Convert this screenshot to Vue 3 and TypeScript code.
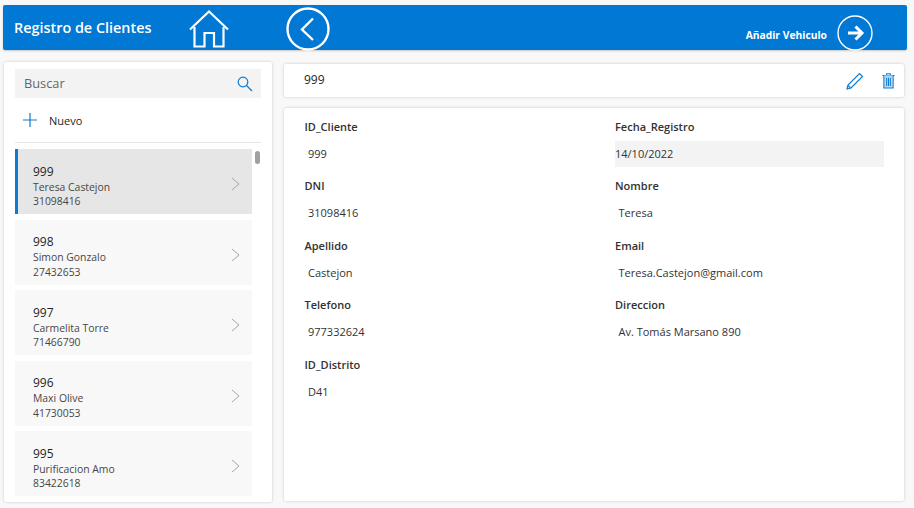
<script setup lang="ts">
interface Cliente { id: string; name: string; dni: string }
const clientes: Cliente[] = [
  { id: '999', name: 'Teresa Castejon', dni: '31098416' },
  { id: '998', name: 'Simon Gonzalo', dni: '27432653' },
  { id: '997', name: 'Carmelita Torre', dni: '71466790' },
  { id: '996', name: 'Maxi Olive', dni: '41730053' },
  { id: '995', name: 'Purificacion Amo', dni: '83422618' },
]
const campos = [
  { label: 'ID_Cliente', value: '999' },
  { label: 'Fecha_Registro', value: '14/10/2022', shaded: true },
  { label: 'DNI', value: '31098416' },
  { label: 'Nombre', value: 'Teresa' },
  { label: 'Apellido', value: 'Castejon' },
  { label: 'Email', value: 'Teresa.Castejon@gmail.com' },
  { label: 'Telefono', value: '977332624' },
  { label: 'Direccion', value: 'Av. Tomás Marsano 890' },
  { label: 'ID_Distrito', value: 'D41' },
]
</script>

<template>
  <div class="page">
    <header class="bar">
      <h1 class="title">Registro de Clientes</h1>
      <svg class="home" width="40" height="38" viewBox="0 0 40 38" fill="none" stroke="#fff" stroke-width="2.2">
        <path d="M1 19.5 L20 1.5 L39 19.5" />
        <path d="M5.5 17 V36.5 H15.5 V23 H25 V36.5 H34.5 V17" />
      </svg>
      <svg class="back" width="44" height="44" viewBox="0 0 44 44" fill="none" stroke="#fff">
        <circle cx="22" cy="22" r="20.5" stroke-width="2.4" />
        <path d="M27 11.5 L16 22.5 L27 33" stroke-width="2.4" />
      </svg>
      <span class="add">Añadir Vehiculo</span>
      <svg class="next" width="36" height="36" viewBox="0 0 36 36" fill="none" stroke="#fff">
        <circle cx="18" cy="18" r="17" stroke-width="1.4" />
        <path d="M11 18 H24.5 M18.5 11.5 L25 18 L18.5 24.5" stroke-width="3" />
      </svg>
    </header>

    <main class="body">
      <aside class="side">
        <div class="search">
          <span class="search-text">Buscar</span>
          <svg width="16" height="16" viewBox="0 0 16 16" fill="none" stroke="#0f7bd0" stroke-width="1.2">
            <circle cx="6" cy="6" r="4.8" />
            <path d="M9.5 9.5 L15 15" />
          </svg>
        </div>
        <div class="new">
          <svg width="14" height="14" viewBox="0 0 14 14" stroke="#0f7bd0" stroke-width="1.2">
            <path d="M7 0 V14 M0 7 H14" />
          </svg>
          <span>Nuevo</span>
        </div>
        <div class="list-wrap">
          <div class="list">
            <div v-for="(c, i) in clientes" :key="c.id" class="item" :class="{ selected: i === 0 }">
              <div class="item-text">
                <div class="item-id">{{ c.id }}</div>
                <div class="item-sub">{{ c.name }}</div>
                <div class="item-sub">{{ c.dni }}</div>
              </div>
              <svg class="chev" width="9" height="14" viewBox="0 0 9 14" fill="none" stroke="#a6a6a6" stroke-width="1">
                <path d="M1 1 L8 7 L1 13" />
              </svg>
            </div>
          </div>
          <div class="thumb"></div>
        </div>
      </aside>

      <section class="main">
        <div class="top">
          <span class="top-id">999</span>
          <svg class="pencil" width="18" height="18" viewBox="0 0 18 18" fill="none" stroke="#0f7bd0" stroke-width="1.2">
            <path d="M1 17 L2 13 L13.5 1.5 L16.5 4.5 L5 16 Z" />
            <path d="M2 13.5 L4.5 16" />
          </svg>
          <svg class="trash" width="13" height="16" viewBox="0 0 14 17" fill="none" stroke="#0f7bd0" stroke-width="1.1">
            <path d="M0.5 2.5 H13.5 M5 2.5 V0.8 H9 V2.5" />
            <path d="M2 2.5 V16 H12 V2.5" fill="#bcd9f1" />
            <path d="M5 5 V14 M7 5 V14 M9 5 V14" />
          </svg>
        </div>
        <div class="detail">
          <div v-for="f in campos" :key="f.label" class="field">
            <div class="label">{{ f.label }}</div>
            <div class="value" :class="{ shaded: f.shaded }">{{ f.value }}</div>
          </div>
        </div>
      </section>
    </main>
  </div>
</template>

<style>
html, body { margin: 0; background: #f8f8f8; }
</style>

<style scoped>
.page {
  width: 914px;
  height: 508px;
  box-sizing: border-box;
  padding: 5px 7px 6px 3px;
  display: flex;
  flex-direction: column;
  font-family: "Open Sans", "Noto Sans", sans-serif;
  color: #252423;
  overflow: hidden;
}
.bar {
  height: 45px;
  flex: none;
  background: #0078d4;
  border-radius: 2px;
  box-shadow: 0 1px 2px rgba(0, 0, 0, .2);
  display: flex;
  align-items: center;
  color: #fff;
}
.title {
  margin: 0 0 0 11px;
  width: 175px;
  font-size: 14.4px;
  font-weight: 600;
  flex: none;
}
.home { flex: none; margin-top: 3px; }
.back { flex: none; margin: 3px 0 0 57px; }
.add {
  margin: 14px 10px 0 auto;
  font-size: 10.3px;
  font-weight: 700;
}
.next { flex: none; margin: 10px 34px 0 0; }
.body {
  flex: 1;
  min-height: 0;
  display: flex;
  margin-top: 12px;
  padding-left: 1px;
  padding-right: 3px;
  gap: 12px;
}
.side {
  width: 268px;
  flex: none;
  box-sizing: border-box;
  background: #fff;
  border-radius: 2px;
  box-shadow: 0 0 3px rgba(0, 0, 0, .2);
  padding: 7px 11px 5px;
  display: flex;
  flex-direction: column;
}
.search {
  height: 29px;
  flex: none;
  background: #f3f3f3;
  display: flex;
  align-items: center;
  justify-content: space-between;
  padding: 0 8px 0 9px;
}
.search-text { font-size: 12.8px; color: #666; margin-top: -2px; }
.new {
  height: 45px;
  flex: none;
  box-sizing: border-box;
  border-bottom: 1px solid #e8e8e8;
  display: flex;
  align-items: center;
  gap: 12px;
  padding-left: 8px;
  font-size: 11px;
  margin-bottom: 6px;
}
.list-wrap {
  flex: 1;
  min-height: 0;
  position: relative;
  overflow: hidden;
}
.list {
  width: 237px;
  display: flex;
  flex-direction: column;
  gap: 5.5px;
}
.item {
  height: 65px;
  flex: none;
  box-sizing: border-box;
  background: #f8f8f8;
  padding: 4px 12px 0 18px;
  display: flex;
  align-items: center;
  justify-content: space-between;
}
.selected {
  background: #e6e6e6;
  border-left: 3px solid #0f7bd0;
  padding-left: 15px;
}
.chev { margin-top: 1px; }
.item-text { line-height: 14.5px; margin-top: 5px; }
.item-id { font-size: 12px; line-height: 16px; color: #252423; }
.item-sub { font-size: 10.4px; color: #484644; }
.thumb {
  position: absolute;
  right: 1px;
  top: 2px;
  width: 5px;
  height: 13px;
  border-radius: 3px;
  background: #a0a0a0;
}
.main {
  flex: 1;
  min-width: 0;
  display: flex;
  flex-direction: column;
  gap: 11px;
  padding-top: 2px;
}
.top {
  height: 33px;
  flex: none;
  background: #fff;
  border-radius: 2px;
  box-shadow: 0 0 3px rgba(0, 0, 0, .2);
  display: flex;
  align-items: center;
  padding: 0 9px 0 20px;
  font-size: 12px;
}
.top-id { margin-right: auto; margin-top: -2px; }
.pencil { margin-right: 18px; }
.detail {
  flex: 1;
  background: #fff;
  border-radius: 2px;
  box-shadow: 0 0 3px rgba(0, 0, 0, .2);
  padding: 8.6px 20px 0 20.5px;
  margin-bottom: 1px;
  display: grid;
  grid-template-columns: 280px 269px;
  column-gap: 30.5px;
  grid-auto-rows: 59.6px;
  align-content: start;
}
.label { font-size: 11px; font-weight: 600; line-height: 20px; color: #323130; }
.value {
  margin-top: 4px;
  height: 26px;
  line-height: 26px;
  padding-left: 3.5px;
  font-size: 11px;
  color: #333;
}
.shaded { background: #f3f3f3; padding-left: 0; }
</style>
